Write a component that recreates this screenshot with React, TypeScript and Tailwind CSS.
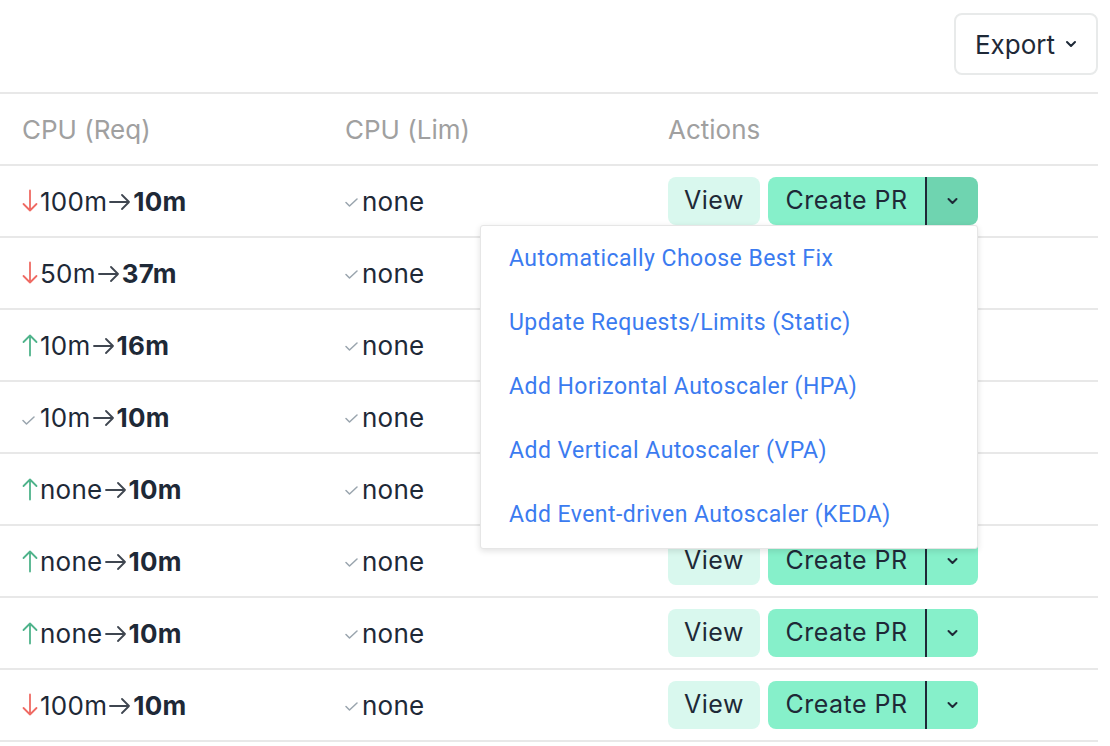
import React from "react";

type Dir = "down" | "up" | "same";

const rows: { dir: Dir; from: string; to: string }[] = [
  { dir: "down", from: "100m", to: "10m" },
  { dir: "down", from: "50m", to: "37m" },
  { dir: "up", from: "10m", to: "16m" },
  { dir: "same", from: "10m", to: "10m" },
  { dir: "up", from: "none", to: "10m" },
  { dir: "up", from: "none", to: "10m" },
  { dir: "up", from: "none", to: "10m" },
  { dir: "down", from: "100m", to: "10m" },
];

const menuItems = [
  "Automatically Choose Best Fix",
  "Update Requests/Limits (Static)",
  "Add Horizontal Autoscaler (HPA)",
  "Add Vertical Autoscaler (VPA)",
  "Add Event-driven Autoscaler (KEDA)",
];

function Chevron({ className }: { className?: string }) {
  return (
    <svg viewBox="0 0 12 8" className={className} fill="none" stroke="currentColor" strokeWidth={2} strokeLinecap="round" strokeLinejoin="round">
      <path d="M2 2l4 4 4-4" />
    </svg>
  );
}

function Check() {
  return (
    <svg viewBox="0 0 13 9" className="mr-[4px] mt-[3px] h-[9px] w-[13px] shrink-0 text-[#9aa5ae]" fill="none" stroke="currentColor" strokeWidth={1.5} strokeLinecap="round" strokeLinejoin="round">
      <path d="M1 4.5l3.5 3.5 7.5-7" />
    </svg>
  );
}

function Trend({ dir }: { dir: Dir }) {
  if (dir === "same") return <span className="mr-[1px] mt-[4px]"><Check /></span>;
  const color = dir === "down" ? "text-[#ef6a63]" : "text-[#4fb38b]";
  return (
    <svg viewBox="0 0 16 24" className={`mr-[2px] h-[24px] w-[16px] shrink-0 ${color}`} fill="none" stroke="currentColor" strokeWidth={1.8} strokeLinecap="round" strokeLinejoin="round">
      {dir === "down" ? (
        <path d="M8 1.5v20M1.5 15l6.5 6.5 6.5-6.5" />
      ) : (
        <path d="M8 22.5v-20M1.5 9l6.5-6.5 6.5 6.5" />
      )}
    </svg>
  );
}

function ArrowRight() {
  return (
    <svg viewBox="0 0 22 16" className="mx-[2px] mt-[2px] h-[16px] w-[22px] shrink-0 text-[#3f4650]" fill="none" stroke="currentColor" strokeWidth={1.8} strokeLinecap="round" strokeLinejoin="round">
      <path d="M1 8h19M13 1l7 7-7 7" />
    </svg>
  );
}

function Actions({ open }: { open: boolean }) {
  return (
    <div className="flex items-center gap-2 font-['Inter',sans-serif] text-[25px] tracking-[0.02em] text-[#1e2937]">
      <button className="h-[48px] w-[92px] rounded-lg bg-[#d9f8ee]">View</button>
      <div className="relative flex h-[48px]">
        <button className="w-[157px] rounded-l-lg bg-[#86f0ca]">Create PR</button>
        <div className="w-[2px] bg-[#1e2937]" />
        <button className={`flex w-[51px] items-center justify-center rounded-r-lg ${open ? "bg-[#6fd4b0]" : "bg-[#86f0ca]"}`}>
          <Chevron className="h-[8px] w-[13px]" />
        </button>
        {open && (
          <div className="absolute right-0 top-full z-10 w-[498px] rounded-[3px] border border-[#e6e6e6] bg-white py-px tracking-normal shadow-[0_2px_6px_rgba(0,0,0,0.12)]">
            {menuItems.map((m) => (
              <div key={m} className="flex h-[64px] items-center pl-[28px] font-['Roboto',sans-serif] text-[23px] tracking-[0.02em] text-[#3b7bf0]">
                {m}
              </div>
            ))}
          </div>
        )}
      </div>
    </div>
  );
}

export default function App() {
  return (
    <div className="w-[1098px] bg-white font-['Inter',sans-serif]">
      <div className="flex justify-end border-b-2 border-[#e8e8e8] pb-[17px] pt-[13px]">
        <button className="flex h-[62px] w-[144px] items-center justify-center gap-[10px] rounded-lg border-2 border-[#e8eaea] text-[26px] text-[#1e2937]">
          Export
          <Chevron className="h-[8px] w-[12px]" />
        </button>
      </div>
      <div className="grid h-[72px] grid-cols-[323px_323px_1fr] items-center border-b-2 border-[#e8e8e8] pl-[22px] text-[26px] text-[#a0a0a0]">
        <div>CPU (Req)</div>
        <div>CPU (Lim)</div>
        <div>Actions</div>
      </div>
      {rows.map((r, i) => (
        <div key={i} className="grid h-[72px] grid-cols-[323px_323px_1fr] items-center border-b-2 border-[#e8e8e8] pl-[22px] text-[26px] tracking-[0.01em] text-[#1e2937]">
          <div className="flex items-center">
            <Trend dir={r.dir} />
            <span>{r.from}</span>
            <ArrowRight />
            <span className="font-bold">{r.to}</span>
          </div>
          <div className="flex items-center">
            <Check />
            <span>none</span>
          </div>
          <Actions open={i === 0} />
        </div>
      ))}
    </div>
  );
}
